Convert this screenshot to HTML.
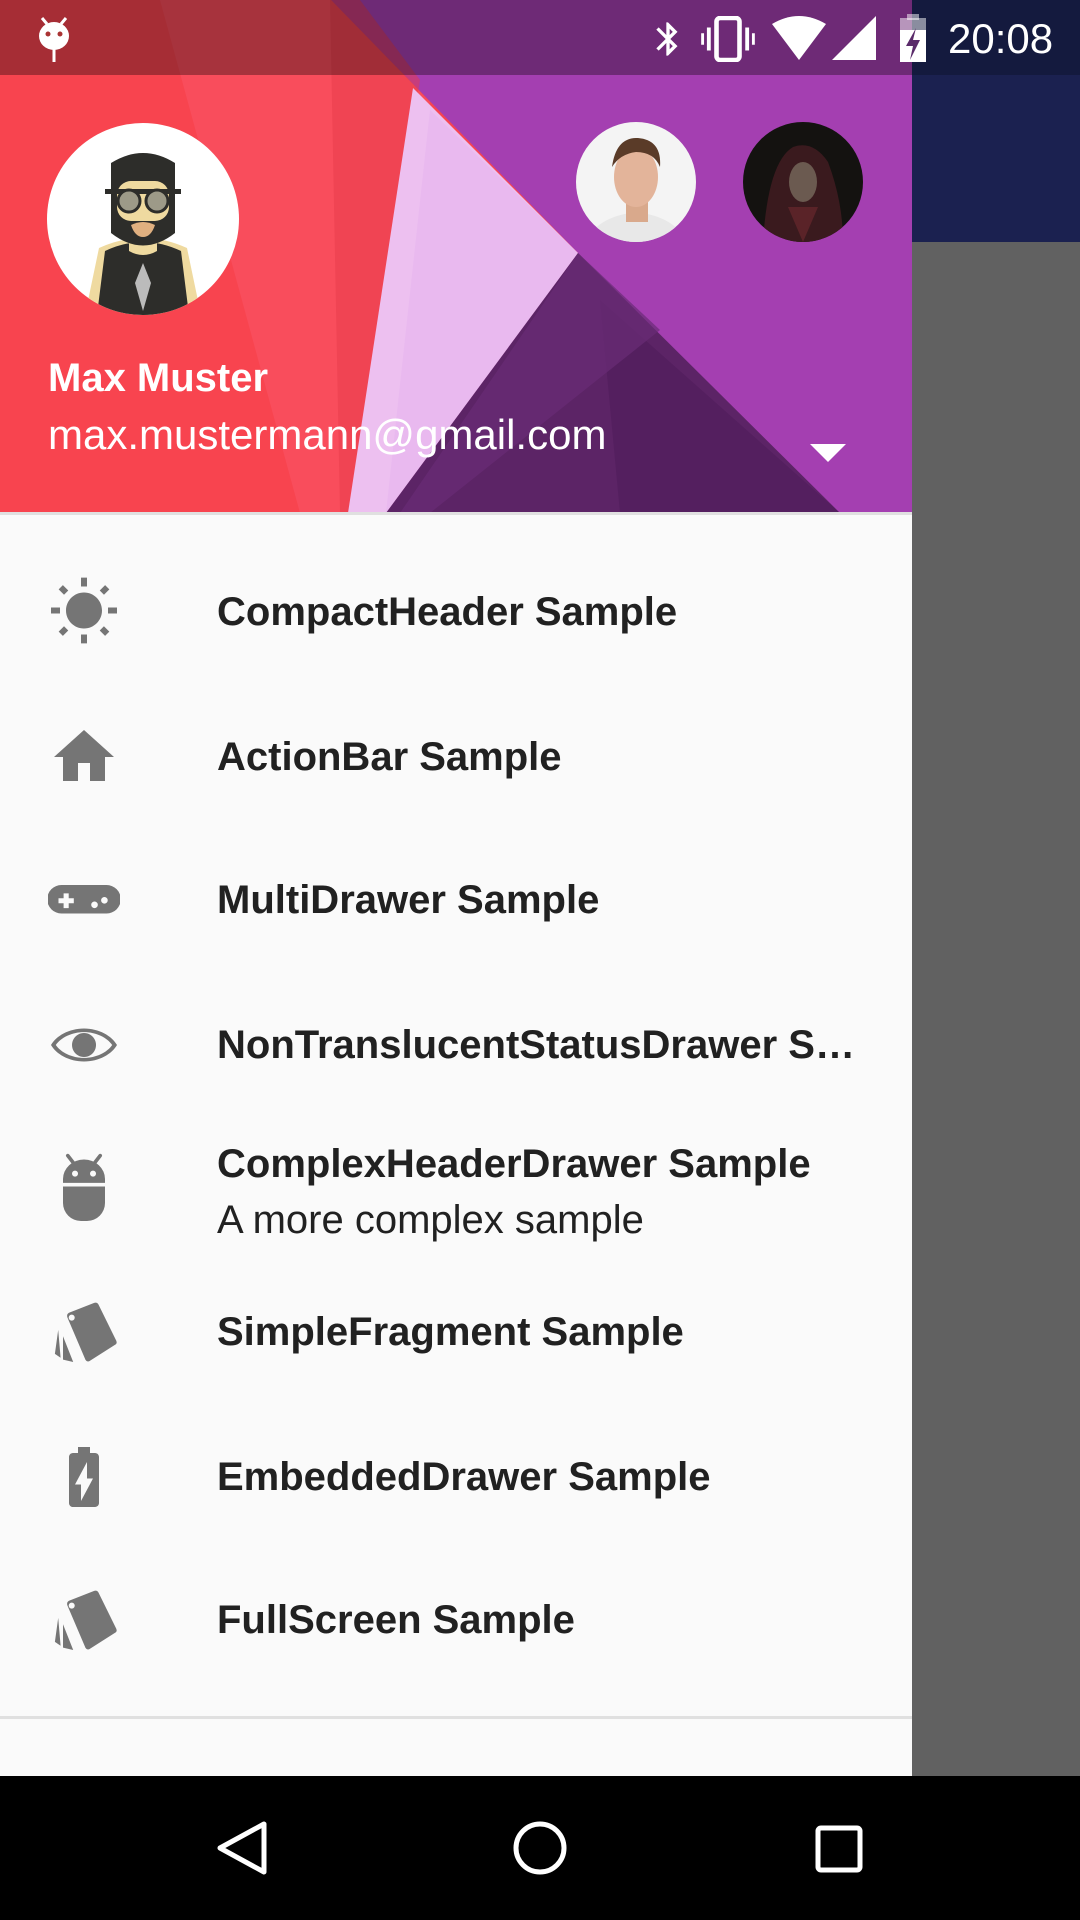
<!DOCTYPE html>
<html><head><meta charset="utf-8"><style>
*{margin:0;padding:0;box-sizing:border-box}
body{width:1080px;height:1920px;overflow:hidden;background:#616161;font-family:"Liberation Sans",Arial,sans-serif;position:relative}
.abs{position:absolute}
.item{position:absolute;left:0;width:912px;height:144px}
.item svg{position:absolute;left:48px;top:36px}
.t{position:absolute;left:217px;font-size:40px;font-weight:bold;color:#212121;white-space:nowrap;line-height:48px}
</style></head><body>
<div class="abs" style="left:912px;top:0;width:168px;height:242px;background:#1b2150"></div>
<div class="abs" style="left:912px;top:0;width:168px;height:75px;background:#141a3e"></div>
<div class="abs" style="left:912px;top:242px;width:168px;height:1536px;background:#616161"></div>

<div class="abs" style="left:0;top:0;width:912px;height:1776px;background:#fafafa"></div>
<svg class="abs" style="left:0;top:0" width="912" height="513" viewBox="0 0 912 513">
<rect width="912" height="513" fill="#a43fb1"/>
<polygon points="0,0 331,0 578,253 386,513 0,513" fill="#f8444f"/>
<polygon points="160,0 331,0 430,102 348,513 300,513" fill="#f94d5c"/>
<polygon points="330,0 360,0 420,80 352,513 340,513" fill="#e83c4a" opacity="0.5"/>
<polygon points="413,88 578,253 386,513 348,513" fill="#edc0f0"/>
<polygon points="430,110 578,253 420,513 386,513" fill="#e6b4ee" opacity="0.6"/>
<polygon points="578,253 840,513 386,513" fill="#5c2466"/>
<polygon points="600,300 840,513 620,513" fill="#4f1d5a" opacity="0.6"/>
<polygon points="578,253 660,330 430,513 400,513" fill="#6a2c76" opacity="0.7"/>
<rect width="912" height="75" fill="#000" opacity="0.33"/>
</svg>
<div class="abs" style="left:0;top:512px;width:912px;height:3px;background:#e0e0e0"></div>

<svg class="abs" style="left:36px;top:14px" width="36" height="50" viewBox="0 0 36 50"><path d="M6 4l5 6M30 4l-5 6" stroke="#fff" stroke-width="3"/><ellipse cx="18" cy="22" rx="15" ry="14" fill="#fff"/><circle cx="12" cy="20" r="2.5" fill="#a33"/><circle cx="24" cy="20" r="2.5" fill="#a33"/><rect x="16.5" y="34" width="3" height="14" fill="#fff"/></svg>
<svg class="abs" style="left:648px;top:16px" width="40" height="46" viewBox="0 0 24 24"><path d="M17.71 7.71L12 2h-1v7.59L6.41 5 5 6.41 10.59 12 5 17.59 6.41 19 11 14.41V22h1l5.710-5.71-4.3-4.29 4.3-4.29zM13 5.83l1.88 1.88L13 9.59V5.830zm1.88 10.46L13 18.17v-3.76l1.88 1.88z" fill="#fff"/></svg>
<svg class="abs" style="left:700px;top:16px" width="56" height="46" viewBox="0 0 28 24"><rect x="8" y="1" width="12" height="22" rx="2" fill="none" stroke="#fff" stroke-width="2.4"/><rect x="3" y="6" width="2" height="12" fill="#fff"/><rect x="23" y="6" width="2" height="12" fill="#fff"/><rect x="0" y="9" width="1.5" height="6" fill="#fff"/><rect x="26.5" y="9" width="1.5" height="6" fill="#fff"/></svg>
<svg class="abs" style="left:772px;top:16px" width="54" height="44" viewBox="0 0 54 44"><path d="M0 8 Q27 -8 54 8 L27 44Z" fill="#fff"/></svg>
<svg class="abs" style="left:832px;top:16px" width="44" height="44"><polygon points="44,0 44,44 0,44" fill="#fff"/></svg>
<svg class="abs" style="left:898px;top:14px" width="30" height="48" viewBox="0 0 30 48"><rect x="9" y="0" width="12" height="6" fill="#fff" opacity="0.5"/><rect x="2" y="4" width="26" height="12" fill="#fff" opacity="0.5"/><path d="M2 16h26v32H2z" fill="#fff"/><path d="M18 14 L8 32 h7 l-3 14 L22 26 h-7z" fill="#5a2a6a"/></svg>
<div class="abs" style="left:948px;top:14px;font-size:42px;color:#fff;line-height:50px">20:08</div>

<svg class="abs" style="left:47px;top:123px" width="192" height="192" viewBox="0 0 192 192">
<defs><clipPath id="c1"><circle cx="96" cy="96" r="96"/></clipPath></defs>
<circle cx="96" cy="96" r="96" fill="#fff"/>
<g clip-path="url(#c1)">
<path d="M38 192 L52 125 Q96 105 140 125 L154 192Z" fill="#efdaa0"/>
<path d="M50 192 L58 128 Q96 110 134 128 L142 192Z" fill="#2d2d2a"/>
<path d="M82 110 h28 v18 q-14 8 -28 0z" fill="#efdaa0"/>
<path d="M96 140 l8 20 -8 28 -8 -28z" fill="#bbb"/>
<path d="M64 40 Q96 20 128 40 L128 110 Q96 135 64 110Z" fill="#2d2d2a"/>
<rect x="70" y="58" width="52" height="40" rx="14" fill="#efdaa0"/>
<rect x="58" y="66" width="76" height="5" fill="#2d2d2a"/>
<circle cx="82" cy="78" r="11" fill="#9d9a88" stroke="#2d2d2a" stroke-width="3"/>
<circle cx="110" cy="78" r="11" fill="#9d9a88" stroke="#2d2d2a" stroke-width="3"/>
<path d="M84 102 q12 -6 24 0 q-4 12 -12 12 q-8 0 -12 -12z" fill="#e0b080"/>
</g></svg>

<svg class="abs" style="left:576px;top:122px" width="120" height="120" viewBox="0 0 120 120">
<defs><clipPath id="c2"><circle cx="60" cy="60" r="60"/></clipPath></defs>
<circle cx="60" cy="60" r="60" fill="#f4f4f4"/>
<g clip-path="url(#c2)"><path d="M10 120 Q20 95 60 90 Q100 95 110 120Z" fill="#e8e8e8"/>
<rect x="50" y="75" width="22" height="25" fill="#d9a98c"/>
<ellipse cx="60" cy="55" rx="22" ry="30" fill="#e3b49a"/>
<path d="M36 45 Q40 15 62 16 Q86 18 84 45 Q78 30 60 30 Q44 32 36 45Z" fill="#5a3b28"/></g></svg>
<svg class="abs" style="left:743px;top:122px" width="120" height="120" viewBox="0 0 120 120">
<defs><clipPath id="c3"><circle cx="60" cy="60" r="60"/></clipPath></defs>
<circle cx="60" cy="60" r="60" fill="#141210"/>
<g clip-path="url(#c3)"><path d="M20 120 Q25 40 50 25 Q70 18 85 40 Q100 80 100 120Z" fill="#3a1a1e"/>
<ellipse cx="60" cy="60" rx="14" ry="20" fill="#6b5a50"/>
<path d="M45 85 L60 120 L75 85" fill="#5a2328"/></g></svg>

<div class="abs" style="left:48px;top:354px;font-size:40px;font-weight:bold;color:#fff;line-height:48px">Max Muster</div>
<div class="abs" style="left:48px;top:411px;font-size:42px;color:#fff;line-height:48px">max.mustermann@gmail.com</div>
<svg class="abs" style="left:810px;top:444px" width="36" height="18"><polygon points="0,0 36,0 18,18" fill="#fff"/></svg>

<div class="item" style="top:540px"><svg width="72" height="72" viewBox="0 0 24 24"><path fill="#757575" d="M6.76 4.84l-1.8-1.79-1.41 1.41 1.79 1.79 1.42-1.41zM4 10.5H1v2h3v-2zm9-9.95h-2V3.5h2V.55zm7.45 3.91l-1.41-1.41-1.79 1.79 1.41 1.41 1.79-1.79zm-3.21 13.7l1.79 1.8 1.41-1.41-1.8-1.79-1.4 1.4zM20 10.5v2h3v-2h-3zm-8-5c-3.31 0-6 2.69-6 6s2.69 6 6 6 6-2.69 6-6-2.69-6-6-6zm-1 16.95h2V19.5h-2v2.95zm-7.45-3.91l1.41 1.41 1.79-1.8-1.41-1.41-1.79 1.8z"/></svg><div class="t" style="top:48px">CompactHeader Sample</div></div>
<div class="item" style="top:685px"><svg width="72" height="72" viewBox="0 0 24 24"><path fill="#757575" d="M10 20v-6h4v6h5v-8h3L12 3 2 12h3v8z"/></svg><div class="t" style="top:48px">ActionBar Sample</div></div>
<div class="item" style="top:828px"><svg width="72" height="72" viewBox="0 0 24 24"><path fill="#757575" fill-rule="evenodd" d="M4.5 7h15a4.5 4.5 0 0 1 0 9.5h-15a4.5 4.5 0 0 1 0-9.5zM5.2 9.8v1.6H3.5v1.7h1.7v1.6h1.7v-1.6h1.7v-1.7H6.9V9.8zM15.5 12.5a1.1 1.1 0 1 0 .01 0zM18.8 11a1.1 1.1 0 1 0 .01 0z"/></svg><div class="t" style="top:48px">MultiDrawer Sample</div></div>
<div class="item" style="top:973px"><svg width="72" height="72" viewBox="0 0 24 24"><path fill="#757575" d="M12 6.5C7 6.5 2.7 9 1 12c1.7 3 6 5.5 11 5.5s9.3-2.5 11-5.5c-1.7-3-6-5.5-11-5.5zm0 1.2c4 0 7.7 1.8 9.4 4.3-1.7 2.5-5.4 4.3-9.4 4.3S4.3 14.5 2.6 12C4.3 9.5 8 7.7 12 7.7zM12 8a4 4 0 1 0 .01 0z"/></svg><div class="t" style="top:48px;width:640px;overflow:hidden;text-overflow:ellipsis">NonTranslucentStatusDrawer Sample</div></div>
<div class="item" style="top:1116px"><svg width="72" height="72" viewBox="0 0 24 24"><path d="M6.6 1.2l2 2.6M17.4 1.2l-2 2.6" stroke="#757575" stroke-width="1.2" stroke-linecap="round"/><path fill="#757575" fill-rule="evenodd" d="M5 10.3V9a7 6.5 0 0 1 14 0v1.3zM9 6.2a1 1 0 1 0 .01 0zM15 6.2a1 1 0 1 0 .01 0zM5 11.5h14v5.5a6 6 0 0 1-6 6h-2a6 6 0 0 1-6-6z"/></svg><div class="t" style="top:24px">ComplexHeaderDrawer Sample</div><div class="t" style="top:80px;font-weight:normal">A more complex sample</div></div>
<div class="item" style="top:1260px"><svg width="72" height="72" viewBox="0 0 24 24"><path fill="#757575" fill-rule="evenodd" d="M7 5.6L15.4 2.3Q16.3 2 16.8 2.8L22.8 15Q23.1 15.9 22.3 16.3L13.8 21.7Q13 22.1 12.5 21.3L6.4 7Q6.2 6 7 5.6zM7.9 6.2a1 1 0 1 0 .01 0z"/><path fill="#757575" d="M3.4 11.3L2.3 19.3L4.2 20.6zM5 13.4L5 21.2L8.4 22z"/></svg><div class="t" style="top:48px">SimpleFragment Sample</div></div>
<div class="item" style="top:1405px"><svg width="72" height="72" viewBox="0 0 24 24"><path fill="#757575" d="M15.67 4H14V2h-4v2H8.33C7.6 4 7 4.6 7 5.33v15.33C7 21.4 7.6 22 8.33 22h7.33c.74 0 1.34-.6 1.34-1.33V5.33C17 4.6 16.4 4 15.67 4zM11 20v-5.5H9L13 7v5.5h2L11 20z"/></svg><div class="t" style="top:48px">EmbeddedDrawer Sample</div></div>
<div class="item" style="top:1548px"><svg width="72" height="72" viewBox="0 0 24 24"><path fill="#757575" fill-rule="evenodd" d="M7 5.6L15.4 2.3Q16.3 2 16.8 2.8L22.8 15Q23.1 15.9 22.3 16.3L13.8 21.7Q13 22.1 12.5 21.3L6.4 7Q6.2 6 7 5.6zM7.9 6.2a1 1 0 1 0 .01 0z"/><path fill="#757575" d="M3.4 11.3L2.3 19.3L4.2 20.6zM5 13.4L5 21.2L8.4 22z"/></svg><div class="t" style="top:48px">FullScreen Sample</div></div>

<div class="abs" style="left:0;top:1716px;width:912px;height:3px;background:#e0e0e0"></div>

<div class="abs" style="left:0;top:1776px;width:1080px;height:144px;background:#000"></div>
<svg class="abs" style="left:214px;top:1820px" width="56" height="56"><polygon points="50,4 50,52 6,28" fill="none" stroke="#fff" stroke-width="5" stroke-linejoin="round"/></svg>
<svg class="abs" style="left:510px;top:1818px" width="60" height="60"><circle cx="30" cy="30" r="24" fill="none" stroke="#fff" stroke-width="5"/></svg>
<svg class="abs" style="left:814px;top:1824px" width="50" height="50"><rect x="4" y="4" width="42" height="42" rx="3" fill="none" stroke="#fff" stroke-width="5"/></svg>
</body></html>
